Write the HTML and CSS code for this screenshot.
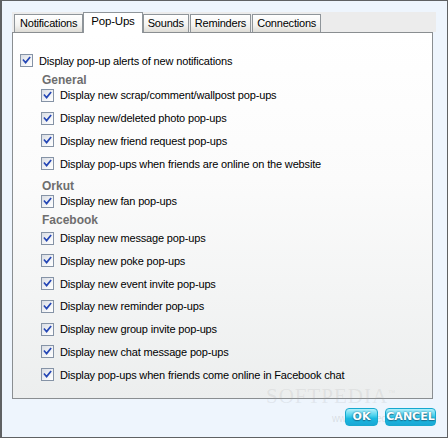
FILE: index.html
```html
<!DOCTYPE html>
<html lang="en">
<head>
  <meta charset="UTF-8">
  <title>Settings - Pop-Ups</title>
  <link rel="stylesheet" href="styles.css">
</head>
<body>

  <div class="window">
    <div class="tabs-wrap">
      <div class="tabstrip">
        <div class="tab">Notifications</div>
        <div class="tab active">Pop-Ups</div>
        <div class="tab">Sounds</div>
        <div class="tab">Reminders</div>
        <div class="tab">Connections</div>
      </div>

      <div class="panel">
        <label class="item main"><span class="cb"><svg width="9" height="9" viewBox="0 0 9 9"><path d="M1.5 4.2 L3.6 6.6 L7.6 1.6"/></svg></span>Display pop-up alerts of new notifications</label>

        <div class="group">General</div>
        <label class="item"><span class="cb"><svg width="9" height="9" viewBox="0 0 9 9"><path d="M1.5 4.2 L3.6 6.6 L7.6 1.6"/></svg></span>Display new scrap/comment/wallpost pop-ups</label>
        <label class="item"><span class="cb"><svg width="9" height="9" viewBox="0 0 9 9"><path d="M1.5 4.2 L3.6 6.6 L7.6 1.6"/></svg></span>Display new/deleted photo pop-ups</label>
        <label class="item"><span class="cb"><svg width="9" height="9" viewBox="0 0 9 9"><path d="M1.5 4.2 L3.6 6.6 L7.6 1.6"/></svg></span>Display new friend request pop-ups</label>
        <label class="item"><span class="cb"><svg width="9" height="9" viewBox="0 0 9 9"><path d="M1.5 4.2 L3.6 6.6 L7.6 1.6"/></svg></span>Display pop-ups when friends are online on the website</label>

        <div class="group orkut">Orkut</div>
        <label class="item"><span class="cb"><svg width="9" height="9" viewBox="0 0 9 9"><path d="M1.5 4.2 L3.6 6.6 L7.6 1.6"/></svg></span>Display new fan pop-ups</label>

        <div class="group facebook">Facebook</div>
        <label class="item"><span class="cb"><svg width="9" height="9" viewBox="0 0 9 9"><path d="M1.5 4.2 L3.6 6.6 L7.6 1.6"/></svg></span>Display new message pop-ups</label>
        <label class="item"><span class="cb"><svg width="9" height="9" viewBox="0 0 9 9"><path d="M1.5 4.2 L3.6 6.6 L7.6 1.6"/></svg></span>Display new poke pop-ups</label>
        <label class="item"><span class="cb"><svg width="9" height="9" viewBox="0 0 9 9"><path d="M1.5 4.2 L3.6 6.6 L7.6 1.6"/></svg></span>Display new event invite pop-ups</label>
        <label class="item"><span class="cb"><svg width="9" height="9" viewBox="0 0 9 9"><path d="M1.5 4.2 L3.6 6.6 L7.6 1.6"/></svg></span>Display new reminder pop-ups</label>
        <label class="item"><span class="cb"><svg width="9" height="9" viewBox="0 0 9 9"><path d="M1.5 4.2 L3.6 6.6 L7.6 1.6"/></svg></span>Display new group invite pop-ups</label>
        <label class="item"><span class="cb"><svg width="9" height="9" viewBox="0 0 9 9"><path d="M1.5 4.2 L3.6 6.6 L7.6 1.6"/></svg></span>Display new chat message pop-ups</label>
        <label class="item"><span class="cb"><svg width="9" height="9" viewBox="0 0 9 9"><path d="M1.5 4.2 L3.6 6.6 L7.6 1.6"/></svg></span>Display pop-ups when friends come online in Facebook chat</label>
      </div>
    </div>

    <div class="buttons">
      <button class="btn ok">OK</button>
      <button class="btn cancel">CANCEL</button>
    </div>

    <div class="watermark">SOFTPEDIA<sup>™</sup></div>
    <div class="watermark-url">www.softpedia.com</div>
  </div>

</body>
</html>
```

FILE: styles.css
```css
html, body {
  margin: 0;
  padding: 0;
}
body {
  font-family: 'Liberation Sans', Arial, sans-serif;
  font-size: 11px;
  letter-spacing: -0.16px;
  color: #000;
  background: #eef5fd;
}
.window {
  position: relative;
  width: 448px;
  height: 438px;
  box-sizing: border-box;
  border: 1px solid #5f6163;
  border-left-width: 2px;
  background: #eef5fd;
  padding: 11px 0 0 10px;
}
.tabs-wrap {
  width: 424px;
}
.tabstrip {
  display: flex;
  align-items: flex-end;
  height: 20px;
  background: #ececec;
  padding-left: 2px;
  gap: 1px;
}
.tab {
  position: relative;
  height: 17px;
  line-height: 16px;
  padding: 0 4px;
  border: 1px solid #8f959a;
  border-bottom: none;
  background: linear-gradient(#ffffff, #f3f3f1 60%, #dedcd6);
  text-align: center;
  white-space: nowrap;
  letter-spacing: -0.2px;
  color: #000;
}
.tab:first-child {
  padding: 0 5px;
}
.tab.active {
  height: 20px;
  line-height: 16px;
  margin: 0 -1px 0 -1px;
  padding: 0 7px;
  background: #fff;
  top: 1px;
  z-index: 2;
  font-size: 11.5px;
}
.panel {
  width: 421px;
  height: 367px;
  box-sizing: border-box;
  border: 1px solid #8a8e91;
  background: linear-gradient(#ffffff 0%, #fbfbfb 40%, #eceeee 100%);
  padding: 19px 0 0 7px;
  display: flex;
  flex-direction: column;
}
.item {
  display: flex;
  align-items: center;
  height: 17px;
  margin-top: 5.75px;
  padding-left: 21px;
  white-space: nowrap;
}
.item.main {
  margin-top: 0;
  padding-left: 0;
}
.cb {
  box-sizing: border-box;
  width: 13px;
  height: 13px;
  margin-right: 6px;
  border: 1px solid #8593a6;
  background: linear-gradient(135deg, #d9dde4, #f6f7f9 70%, #ffffff);
  display: flex;
  align-items: center;
  justify-content: center;
}
.cb svg path {
  fill: none;
  stroke: #2446b5;
  stroke-width: 1.7;
  stroke-linecap: square;
}
.group {
  font-weight: bold;
  font-size: 12px;
  letter-spacing: 0;
  color: #6e6e6e;
  line-height: 14px;
  height: 14px;
  margin: 4px 0 -6px 22px;
}
.group.orkut {
  margin-top: 7px;
}
.group.facebook {
  margin-top: 3px;
  margin-bottom: -3px;
}
.buttons {
  display: flex;
  justify-content: flex-end;
  gap: 7px;
  margin-top: 9px;
  padding-right: 11px;
}
.btn {
  height: 18px;
  padding: 0;
  border: 1px solid #17a9cf;
  border-radius: 4px;
  background: linear-gradient(#b4f0fb 0%, #4ed3ee 40%, #19b9e0 60%, #1aa7d6 100%);
  color: #fff;
  font-family: 'DejaVu Sans', sans-serif;
  font-weight: bold;
  font-size: 11px;
  letter-spacing: 0;
  line-height: 16px;
  text-shadow: 0 0 2px #1b6f8f, 0 1px 1px #1b6f8f;
  position: relative;
  z-index: 2;
}
.ok {
  width: 33px;
}
.cancel {
  width: 51px;
}
.watermark {
  position: absolute;
  left: 264px;
  top: 383px;
  font-family: 'Liberation Serif', serif;
  font-size: 21px;
  line-height: 18px;
  letter-spacing: 1px;
  color: rgba(160, 160, 160, 0.18);
  pointer-events: none;
}
.watermark sup {
  font-size: 7px;
}
.watermark-url {
  position: absolute;
  left: 330px;
  top: 412px;
  font-size: 10px;
  color: rgba(150, 150, 150, 0.25);
  z-index: 1;
}
```
